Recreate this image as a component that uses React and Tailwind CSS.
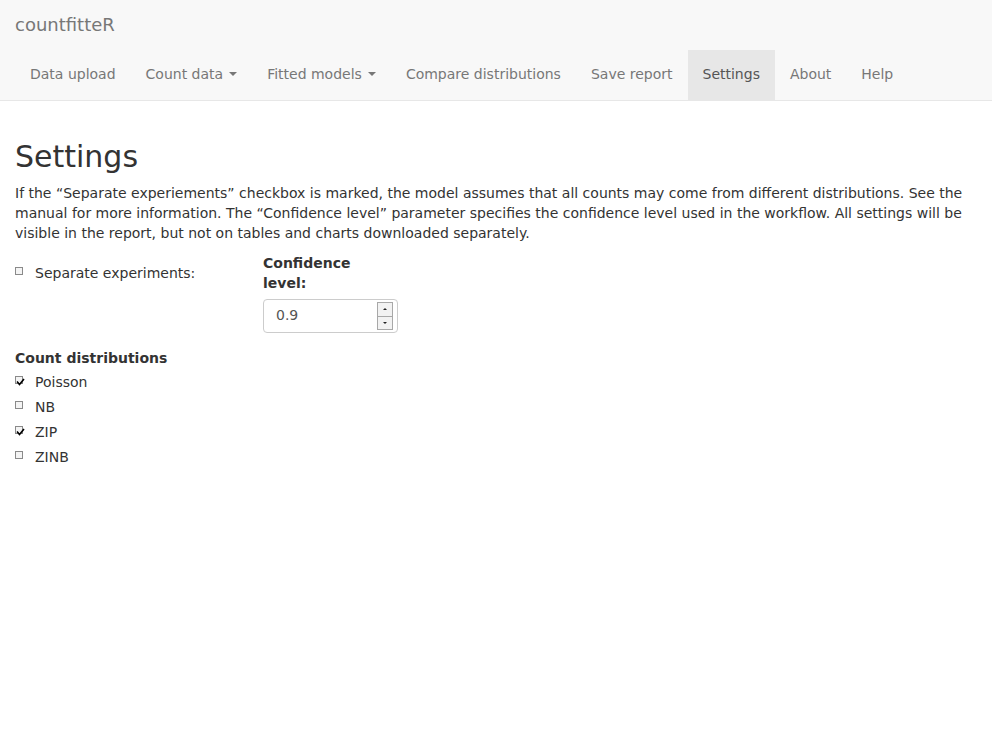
import React from "react";

function Caret() {
  return (
    <span className="inline-block ml-[6px] align-middle w-0 h-0 border-x-[4px] border-x-transparent border-t-[4px] border-t-[#777]" />
  );
}

function Box({ checked }) {
  return (
    <span className="relative inline-block w-[8px] h-[8px] border border-[#8a8a8a] bg-[#f4f4f4] -translate-y-[2px]">
      {checked && (
        <svg className="absolute left-[0px] top-[1px]" width="9" height="8" viewBox="0 0 9 8">
          <path d="M1 3.5 L3.5 6.5 L8 1" fill="none" stroke="#000" strokeWidth="1.6" />
        </svg>
      )}
    </span>
  );
}

function Check({ label, checked }) {
  return (
    <div className="flex items-center h-[20px]">
      <span className="w-[20px] flex items-center">
        <Box checked={checked} />
      </span>
      <span>{label}</span>
    </div>
  );
}

export default function App() {
  const items = [
    { t: "Data upload" },
    { t: "Count data", c: true },
    { t: "Fitted models", c: true },
    { t: "Compare distributions" },
    { t: "Save report" },
    { t: "Settings", a: true },
    { t: "About" },
    { t: "Help" },
  ];
  return (
    <div className="min-h-[744px] bg-white text-[14px] leading-[20px] text-[#333]" style={{ fontFamily: '"DejaVu Sans", sans-serif' }}>
      <div className="bg-[#f8f8f8] border-b border-[#e7e7e7] px-[15px]">
        <div className="h-[50px] flex items-center text-[18px] text-[#777]">countfitteR</div>
        <div className="flex h-[50px]">
          {items.map((it) => (
            <div
              key={it.t}
              className={`px-[15px] pb-[2px] flex items-center ${it.a ? "bg-[#e7e7e7] text-[#555]" : "text-[#777]"}`}
            >
              {it.t}
              {it.c && <Caret />}
            </div>
          ))}
        </div>
      </div>
      <div className="px-[15px]">
        <h2 className="mt-[39px] mb-[10px] text-[30px] leading-[33px] font-normal">Settings</h2>
        <p className="mb-0">
          If the “Separate experiements” checkbox is marked, the model assumes that all counts may come from different distributions. See the manual for more information. The “Confidence level” parameter specifies the confidence level used in the workflow. All settings will be visible in the report, but not on tables and charts downloaded separately.
        </p>
        <div className="flex mt-[10px]">
          <div className="w-[248px] pt-[10px]">
            <Check label="Separate experiments:" />
          </div>
          <div className="w-[135px]">
            <div className="font-bold mb-[6px]">Confidence level:</div>
            <div className="h-[34px] border border-[#ccc] rounded-[4px] flex items-center pl-[12px] pr-[4px] text-[#555]">
              <span className="flex-1 pb-[2px]">0.9</span>
              <div className="flex flex-col w-[16px] h-[28px]">
                <div className="flex-1 border border-[#a8a8a8] bg-[#f2f2f2] flex items-center justify-center">
                  <span className="w-0 h-0 border-x-[2px] border-x-transparent border-b-[2px] border-b-[#222]" />
                </div>
                <div className="flex-1 border border-t-0 border-[#a8a8a8] bg-[#f2f2f2] flex items-center justify-center">
                  <span className="w-0 h-0 border-x-[2px] border-x-transparent border-t-[2px] border-t-[#222]" />
                </div>
              </div>
            </div>
          </div>
        </div>
        <div className="mt-[15px] font-bold">Count distributions</div>
        <div className="mt-[4px] flex flex-col gap-[5px]">
          <Check label="Poisson" checked />
          <Check label="NB" />
          <Check label="ZIP" checked />
          <Check label="ZINB" />
        </div>
      </div>
    </div>
  );
}
